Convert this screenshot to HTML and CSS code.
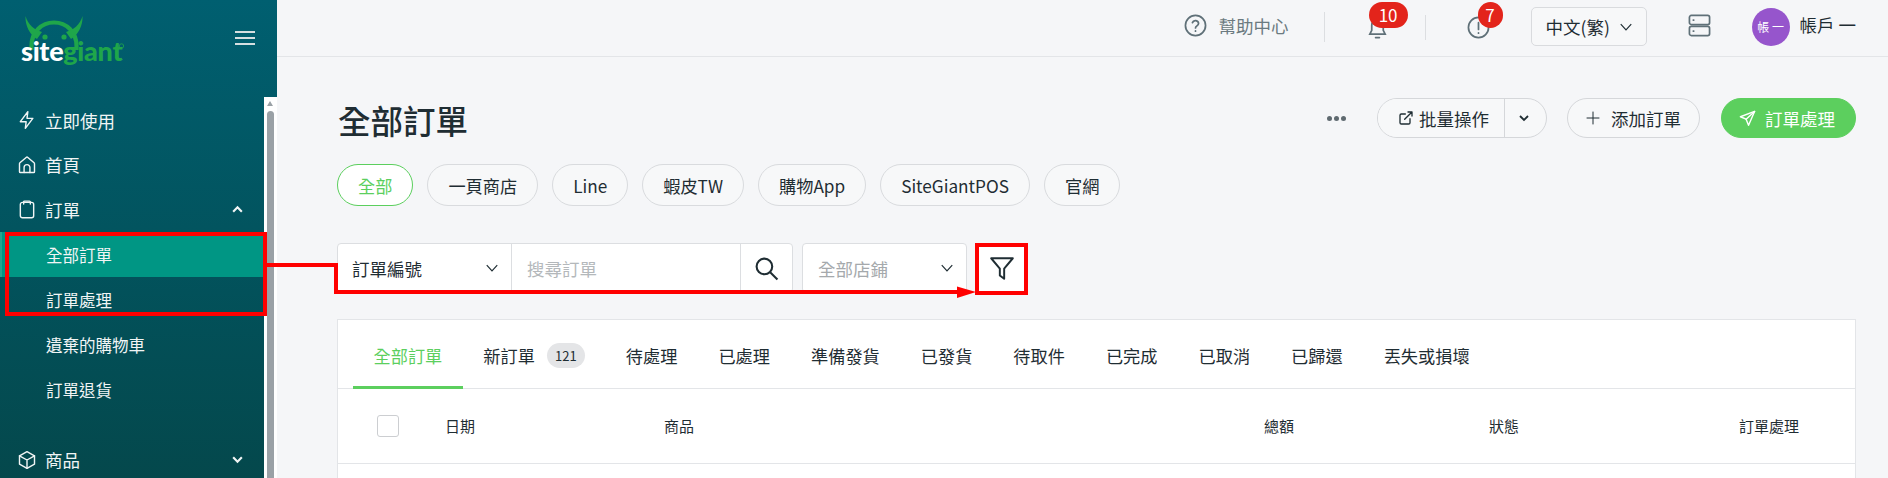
FILE: index.html
```html
<!DOCTYPE html>
<html lang="zh-Hant">
<head>
    <meta charset="utf-8">
    <title>全部訂單</title>
    <link rel="stylesheet" href="styles.css">
</head>
<body>
    <div class="app">
        <aside class="sidebar">
            <div class="brand">
                <svg class="logo" width="130" height="70" viewBox="0 0 130 70">
                    <path d="M31.500 50V46C31.500 32 41.500 22.500 54 22.500C66.500 22.500 76.500 32 76.500 46V50" fill="none" stroke="#1fa64a" stroke-width="4.200"/>
                    <path d="M25.500 16C25 26 30 35 37 39L42 32C35 30 28 25 25.500 16Z" fill="#1fa64a"/>
                    <path d="M82.500 16C83 26 78 35 71 39L66 32C73 30 80 25 82.500 16Z" fill="#1fa64a"/>
                    <circle cx="45" cy="37" r="2.600" fill="#1fa64a"/>
                    <circle cx="64" cy="37" r="2.600" fill="#1fa64a"/>
                    <text class="logo-text" x="21" y="61"><tspan fill="#fff">site</tspan><tspan fill="#1fa64a">giant</tspan></text>
                    <circle cx="121.500" cy="46" r="2.200" fill="none" stroke="#1fa64a" stroke-width=".8"/>
                </svg>
                <button class="burger"><span></span><span></span><span></span></button>
            </div>
            <div class="side-body">
                <nav class="nav">
                    <a class="nav-item">
                        <svg class="nav-icon" viewBox="0 0 24 24"><path d="M13 2L4 14h7l-1 8 9-12h-7z"/></svg>
                        立即使用
                    </a>
                    <a class="nav-item">
                        <svg class="nav-icon" viewBox="0 0 24 24"><path d="M4 21h16a1 1 0 0 0 1-1V10.500a1.500 1.500 0 0 0-.5-1.100l-7.500-6.500a1.500 1.500 0 0 0-2 0L3.500 9.400A1.500 1.500 0 0 0 3 10.500V20a1 1 0 0 0 1 1z"/><path d="M8.500 21v-6a3.500 3.500 0 0 1 7 0v6"/></svg>
                        首頁
                    </a>
                    <a class="nav-item">
                        <svg class="nav-icon" viewBox="0 0 24 24"><rect x="4" y="4" width="16" height="18.500" rx="2.500"/><path d="M8 6V3.500a1 1 0 0 1 1-1h6a1 1 0 0 1 1 1V6"/></svg>
                        訂單
                        <svg class="nav-caret" viewBox="0 0 12 12"><path d="M2 8l4-4 4 4"/></svg>
                    </a>
                    <a class="sub-item active">全部訂單</a>
                    <a class="sub-item">訂單處理</a>
                    <a class="sub-item">遺棄的購物車</a>
                    <a class="sub-item">訂單退貨</a>
                    <a class="nav-item nav-gap">
                        <svg class="nav-icon" viewBox="0 0 24 24"><path d="M12 2l9 5v10l-9 5-9-5V7z"/><path d="M3 7l9 5 9-5M12 12v10"/></svg>
                        商品
                        <svg class="nav-caret" viewBox="0 0 12 12"><path d="M2 4l4 4 4-4"/></svg>
                    </a>
                </nav>
                <div class="scrollbar">
                    <div class="scroll-arrow"></div>
                    <div class="scroll-thumb"></div>
                </div>
            </div>
        </aside>

        <div class="main">
            <header class="topbar">
                <div class="help">
                    <svg class="top-icon" viewBox="0 0 24 24"><circle cx="12" cy="12" r="10.500"/><path d="M8.800 9a3.300 3.300 0 0 1 6.400 1c0 2.200-3.200 2.600-3.200 4.500"/><path d="M12 17.500v.5"/></svg>
                    幫助中心
                </div>
                <div class="top-sep tall"></div>
                <div class="notify">
                    <svg class="top-icon" viewBox="0 0 24 24"><path d="M6 10c0-4 2.500-7 6-7s6 3 6 7v5l2 4H4l2-4z"/><path d="M10 22.500h4"/></svg>
                    <span class="count count-wide">10</span>
                </div>
                <div class="top-sep"></div>
                <div class="notify">
                    <svg class="top-icon" viewBox="0 0 24 24"><circle cx="12" cy="12" r="10.500"/><path d="M12 7v7M12 17.500v.5"/></svg>
                    <span class="count">7</span>
                </div>
                <div class="lang">
                    中文(繁)
                    <svg class="chev" viewBox="0 0 12 12"><path d="M1.500 3.500L6 8.500l4.500-5"/></svg>
                </div>
                <svg class="server" viewBox="0 0 24 24"><rect x="1.500" y="1.500" width="21" height="9.500" rx="2"/><rect x="1.500" y="13" width="21" height="9.500" rx="2"/><path d="M5.500 6.300h.5M5.500 17.800h.5"/></svg>
                <div class="account">
                    <span class="avatar">帳 一</span>
                    <span class="account-name">帳戶 一</span>
                </div>
            </header>

            <div class="content">
                <div class="title-row">
                    <h1>全部訂單</h1>
                    <div class="actions">
                        <div class="more"><i></i><i></i><i></i></div>
                        <div class="btn-group">
                            <button class="btn btn-split">
                                <svg class="btn-icon" viewBox="0 0 24 24"><path d="M18 13v6a2 2 0 0 1-2 2H5a2 2 0 0 1-2-2V8a2 2 0 0 1 2-2h6"/><path d="M15 3h6v6M10 14L21 3"/></svg>
                                批量操作
                            </button>
                            <button class="btn-caret"><svg class="btn-chev" viewBox="0 0 12 12"><path d="M2 4l4 4 4-4"/></svg></button>
                        </div>
                        <button class="btn btn-add"><svg class="btn-icon plus" viewBox="0 0 24 24"><path d="M12 3v18M3 12h18"/></svg>添加訂單</button>
                        <button class="btn btn-primary">
                            <svg class="btn-icon send" viewBox="0 0 24 24"><path d="M22 2L2 9.500l8 3.500 3.500 8.500z"/><path d="M22 2L10 13"/></svg>
                            訂單處理
                        </button>
                    </div>
                </div>

                <div class="pills">
                    <a class="pill selected">全部</a>
                    <a class="pill">一頁商店</a>
                    <a class="pill">Line</a>
                    <a class="pill">蝦皮TW</a>
                    <a class="pill">購物App</a>
                    <a class="pill">SiteGiantPOS</a>
                    <a class="pill">官網</a>
                </div>

                <div class="filters">
                    <div class="search">
                        <div class="search-type">
                            訂單編號
                            <svg class="chev" viewBox="0 0 12 12"><path d="M1.500 3.500L6 8.500l4.500-5"/></svg>
                        </div>
                        <div class="search-input">搜尋訂單</div>
                        <div class="search-btn">
                            <svg viewBox="0 0 24 24"><circle cx="10" cy="10" r="7.500"/><path d="M15.500 15.500L22.500 22.500"/></svg>
                        </div>
                    </div>
                    <div class="store-select">
                        全部店鋪
                        <svg class="chev" viewBox="0 0 12 12"><path d="M1.500 3.500L6 8.500l4.500-5"/></svg>
                    </div>
                    <div class="filter-btn">
                        <svg viewBox="0 0 24 24"><path d="M2 3h20l-8 9.500V22l-4-3v-6.500z"/></svg>
                    </div>
                </div>

                <section class="card">
                    <div class="tabs">
                        <a class="tab current">全部訂單</a>
                        <a class="tab">新訂單<span class="tab-badge">121</span></a>
                        <a class="tab">待處理</a>
                        <a class="tab">已處理</a>
                        <a class="tab">準備發貨</a>
                        <a class="tab">已發貨</a>
                        <a class="tab">待取件</a>
                        <a class="tab">已完成</a>
                        <a class="tab">已取消</a>
                        <a class="tab">已歸還</a>
                        <a class="tab">丟失或損壞</a>
                    </div>
                    <div class="table-head">
                        <span class="checkbox"></span>
                        <div class="th">日期</div>
                        <div class="th">商品</div>
                        <div class="th">總額</div>
                        <div class="th">狀態</div>
                        <div class="th">訂單處理</div>
                    </div>
                </section>
            </div>
        </div>
    </div>

    <!-- red callout drawn on top of the screenshot -->
    <svg class="callout" width="1888" height="478" viewBox="0 0 1888 478">
        <rect x="7" y="234" width="258" height="80"/>
        <path d="M267 265H336V292H960"/>
        <polygon points="957,286.500 976,292 957,298"/>
        <rect x="977" y="245" width="49" height="48"/>
    </svg>
</body>
</html>
```

FILE: styles.css
```css
* {
    box-sizing: border-box;
}
html, body {
    margin: 0;
    padding: 0;
    height: 100%;
    overflow: hidden;
}
body {
    font-family: "Noto Sans CJK TC", "Noto Sans", sans-serif;
    color: #1f2d33;
    background-color: #f5f6f8;
}
button {
    font-family: inherit;
}
svg {
    display: block;
}
.app {
    display: flex;
    height: 478px;
    overflow: hidden;
}

/* sidebar */
.sidebar {
    width: 277px;
    flex-shrink: 0;
    display: flex;
    flex-direction: column;
    color: #f1f5f5;
    background: linear-gradient(180deg, #005f70 0%, #04484c 100%);
}
.brand {
    height: 97px;
    flex-shrink: 0;
    display: flex;
    justify-content: space-between;
    align-items: flex-start;
}
.logo-text {
    font-family: Lato, sans-serif;
    font-weight: 900;
    font-size: 27px;
    letter-spacing: -0.3px;
}
.burger {
    margin: 31px 22px 0 0;
    padding: 0;
    width: 20px;
    background: none;
    border: none;
    display: flex;
    flex-direction: column;
    gap: 4px;
}
.burger span {
    height: 2px;
    background-color: #d5dfe1;
}
.side-body {
    flex: 1;
    display: flex;
    min-height: 0;
}
.nav {
    flex: 1;
    padding-top: 1px;
    min-width: 0;
}
.nav-item {
    height: 44.500px;
    padding-left: 17px;
    display: flex;
    align-items: center;
    font-size: 17.500px;
}
.nav-gap {
    margin-top: 26px;
}
.nav-icon {
    width: 20px;
    height: 20px;
    margin-right: 8px;
    fill: none;
    stroke: #f1f5f5;
    stroke-width: 1.700;
    stroke-linejoin: round;
    stroke-linecap: round;
}
.nav-caret {
    width: 13px;
    height: 13px;
    margin-left: auto;
    margin-right: 20px;
    fill: none;
    stroke: #f1f5f5;
    stroke-width: 2;
}
.sub-item {
    height: 45px;
    padding: 2px 0 0 46px;
    display: flex;
    align-items: center;
    font-size: 16.500px;
}
.sub-item.active {
    background-color: #009684;
    border-left: 2px solid #23a58f;
    padding-left: 44px;
}
.scrollbar {
    width: 13px;
    padding: 0 3px;
    background-color: #fff;
}
.scroll-arrow {
    margin: 4px 0 5px;
    width: 0;
    height: 0;
    border-left: 3.500px solid transparent;
    border-right: 3.500px solid transparent;
    border-bottom: 5px solid #9aa1a6;
}
.scroll-thumb {
    height: 400px;
    background-color: #9aa1a6;
    border-radius: 4px 4px 0 0;
}

/* top bar */
.main {
    flex: 1;
    min-width: 0;
}
.topbar {
    height: 57px;
    padding: 0 32px 6px 0;
    display: flex;
    justify-content: flex-end;
    align-items: center;
    border-bottom: 1px solid #e3e5e8;
    font-size: 17.500px;
}
.top-icon {
    width: 23px;
    height: 23px;
    fill: none;
    stroke: #5f7078;
    stroke-width: 1.800;
    stroke-linecap: round;
}
.help {
    display: flex;
    align-items: center;
    gap: 12px;
    color: #6b7a80;
}
.top-sep {
    width: 1px;
    height: 25px;
    margin-left: 36px;
    margin-top: 4px;
    background-color: #dcdee1;
}
.top-sep.tall {
    height: 30px;
    margin-left: 35px;
}
.notify {
    position: relative;
    margin-left: 41px;
    padding-top: 4px;
}
.count {
    position: absolute;
    top: -10px;
    left: 11px;
    width: 25px;
    height: 26px;
    border-radius: 13px;
    background-color: #e3241b;
    color: #fff;
    font-size: 17px;
    line-height: 25px;
    text-align: center;
}
.count-wide {
    left: 3px;
    width: 39px;
}
.lang {
    margin: 3px 0 0 41px;
    width: 116px;
    height: 39px;
    padding-left: 14px;
    display: flex;
    align-items: center;
    gap: 9px;
    background-color: #f7f8f9;
    border: 1px solid #d9dbde;
    border-radius: 5px;
}
.chev {
    width: 14px;
    height: 14px;
    flex-shrink: 0;
    fill: none;
    stroke: #1f2d33;
    stroke-width: 1;
}
.server {
    margin-left: 41px;
    width: 23px;
    height: 23px;
    fill: none;
    stroke: #5f7078;
    stroke-width: 1.800;
    stroke-linecap: round;
}
.account {
    margin: 3px 0 0 41px;
    display: flex;
    align-items: center;
    gap: 10px;
}
.account-name {
    margin-top: -4px;
}
.avatar {
    width: 38px;
    height: 38px;
    border-radius: 50%;
    background-color: #9655cc;
    color: #fff;
    font-size: 12px;
    display: flex;
    align-items: center;
    justify-content: center;
}

/* page content */
.content {
    padding: 41px 32px 0 60px;
}
.title-row {
    display: flex;
    justify-content: space-between;
    align-items: center;
    height: 40px;
}
h1 {
    margin: 3px 0 0 1px;
    font-size: 32.500px;
    font-weight: 500;
    line-height: 40px;
}
.actions {
    display: flex;
    align-items: center;
}
.more {
    display: flex;
    gap: 2px;
    margin-right: 31px;
}
.more i {
    width: 5px;
    height: 5px;
    border-radius: 50%;
    background-color: #5f6a70;
}
.btn-group {
    display: flex;
    height: 40px;
    margin-right: 20px;
    border: 1px solid #d5d7da;
    border-radius: 20px;
    background-color: #f7f8f9;
}
.btn {
    height: 40px;
    display: flex;
    align-items: center;
    background-color: #f7f8f9;
    border: 1px solid #d5d7da;
    border-radius: 20px;
    font-size: 17.500px;
    color: #1f2d33;
}
.btn-split {
    width: 127px;
    height: 38px;
    padding: 0 0 0 20px;
    border: none;
    border-right: 1px solid #d5d7da;
    border-radius: 20px 0 0 20px;
}
.btn-caret {
    width: 41px;
    padding: 0 0 0 13px;
    background: none;
    border: none;
}
.btn-chev {
    width: 12px;
    height: 12px;
    fill: none;
    stroke: #1f2d33;
    stroke-width: 1.800;
}
.btn-icon {
    width: 16px;
    height: 16px;
    margin-right: 5px;
    flex-shrink: 0;
    fill: none;
    stroke: #1f2d33;
    stroke-width: 2;
    stroke-linecap: round;
    stroke-linejoin: round;
}
.btn-add {
    width: 133px;
    padding: 0 0 0 17px;
    margin-right: 21px;
}
.btn-icon.plus {
    margin-right: 10px;
    stroke-width: 1.500;
}
.btn-primary {
    width: 135px;
    padding: 0 0 0 17px;
    background-color: #5ccf5e;
    border-color: #5ccf5e;
    color: #fff;
}
.btn-icon.send {
    width: 17px;
    height: 17px;
    margin-right: 9px;
    stroke: #fff;
}
.pills {
    display: flex;
    gap: 14px;
    margin-top: 26px;
}
.pill {
    height: 42px;
    padding: 0 20px;
    display: flex;
    align-items: center;
    font-size: 17.200px;
    background-color: #f7f8f9;
    border: 1px solid #d9dbde;
    border-radius: 21px;
}
.pill.selected {
    color: #5ccf5e;
    background-color: #fff;
    border-color: #5ccf5e;
}
.filters {
    display: flex;
    margin-top: 37px;
    height: 50px;
}
.search {
    display: flex;
    width: 456px;
    background-color: #fff;
    border: 1px solid #dcdee1;
    border-radius: 4px;
}
.search-type {
    width: 174px;
    padding: 0 12px 0 14px;
    display: flex;
    align-items: center;
    justify-content: space-between;
    font-size: 17.500px;
    border-right: 1px solid #dcdee1;
}
.search-input {
    flex: 1;
    padding-left: 15px;
    display: flex;
    align-items: center;
    font-size: 17.500px;
    color: #b4b8bb;
    border-right: 1px solid #dcdee1;
}
.search-btn {
    width: 51px;
    display: flex;
    align-items: center;
    justify-content: center;
}
.search-btn svg {
    width: 25px;
    height: 25px;
    fill: none;
    stroke: #1f2d33;
    stroke-width: 2;
}
.store-select {
    margin-left: 9px;
    width: 165px;
    padding: 0 12px 0 15px;
    display: flex;
    align-items: center;
    justify-content: space-between;
    font-size: 17.500px;
    color: #a5a9ac;
    background-color: #fff;
    border: 1px solid #dcdee1;
    border-radius: 4px;
}
.filter-btn {
    margin-left: 9px;
    width: 52px;
    display: flex;
    align-items: center;
    justify-content: center;
    background-color: #fff;
}
.filter-btn svg {
    width: 26px;
    height: 26px;
    fill: none;
    stroke: #1f2d33;
    stroke-width: 1.800;
    stroke-linejoin: round;
}

/* orders card */
.card {
    margin-top: 26px;
    height: 200px;
    background-color: #fff;
    border: 1px solid #e3e5e8;
    border-bottom: none;
}
.tabs {
    height: 69px;
    padding-left: 15px;
    display: flex;
    border-bottom: 1px solid #e3e5e8;
}
.tab {
    height: 69px;
    padding: 1px 20.500px 0;
    display: flex;
    align-items: center;
    font-size: 17.200px;
    white-space: nowrap;
}
.tab.current {
    color: #5ccf5e;
    border-bottom: 3px solid #5ccf5e;
    padding-top: 4px;
}
.tab-badge {
    margin-left: 12px;
    width: 38px;
    height: 25px;
    border-radius: 13px;
    background-color: #e4e5e7;
    font-size: 13px;
    display: flex;
    align-items: center;
    justify-content: center;
}
.table-head {
    height: 75px;
    padding-left: 39px;
    display: grid;
    grid-template-columns: 68px 219px 600px 225px 250px 1fr;
    align-items: center;
    font-size: 15px;
    border-bottom: 1px solid #e3e5e8;
}
.th {
    padding-bottom: 2px;
}
.checkbox {
    display: block;
    width: 22px;
    height: 22px;
    background-color: #fff;
    border: 1px solid #ccced1;
    border-radius: 3px;
}
.callout {
    position: absolute;
    top: 0;
    left: 0;
    pointer-events: none;
    fill: none;
    stroke: #f00;
    stroke-width: 4;
}
.callout polygon {
    fill: #f00;
    stroke: none;
}
```
